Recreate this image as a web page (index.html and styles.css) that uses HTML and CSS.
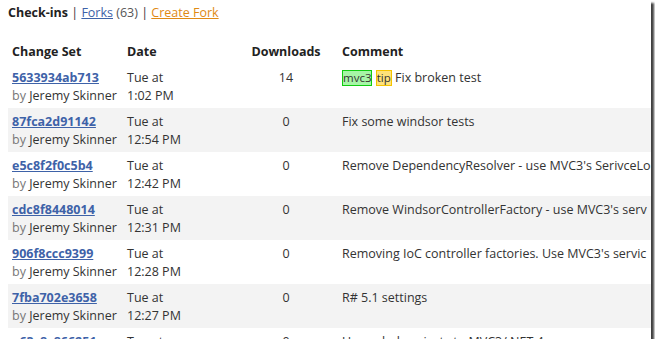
FILE: index.html
```html
<!DOCTYPE html>
<html lang="en">
<head>
  <meta charset="UTF-8">
  <title>Check-ins</title>
  <link rel="stylesheet" href="styles.css">
</head>
<body>
  <div class="frame">
    <!-- Pestañas -->
    <div class="tabs">
      <strong>Check-ins</strong> <span class="sep">|</span>
      <a href="#" class="link">Forks</a> <span class="count">(63)</span> <span class="sep">|</span>
      <a href="#" class="create">Create Fork</a>
    </div>

    <table class="changes">
      <colgroup>
        <col class="c-set">
        <col class="c-date">
        <col class="c-dl">
        <col>
      </colgroup>
      <thead>
        <tr>
          <th>Change Set</th>
          <th>Date</th>
          <th class="num">Downloads</th>
          <th>Comment</th>
        </tr>
      </thead>
      <tbody>
        <tr>
          <td><a href="#" class="hash">5633934ab713</a><br><span class="by">by</span> Jeremy Skinner</td>
          <td>Tue at<br>1:02 PM</td>
          <td class="num">14</td>
          <td><span class="tag tag-green">mvc3</span> <span class="tag tag-yellow">tip</span> Fix broken test</td>
        </tr>
        <tr>
          <td><a href="#" class="hash">87fca2d91142</a><br><span class="by">by</span> Jeremy Skinner</td>
          <td>Tue at<br>12:54 PM</td>
          <td class="num">0</td>
          <td>Fix some windsor tests</td>
        </tr>
        <tr>
          <td><a href="#" class="hash">e5c8f2f0c5b4</a><br><span class="by">by</span> Jeremy Skinner</td>
          <td>Tue at<br>12:42 PM</td>
          <td class="num">0</td>
          <td>Remove DependencyResolver - use MVC3's SerivceLo</td>
        </tr>
        <tr>
          <td><a href="#" class="hash">cdc8f8448014</a><br><span class="by">by</span> Jeremy Skinner</td>
          <td>Tue at<br>12:31 PM</td>
          <td class="num">0</td>
          <td>Remove WindsorControllerFactory - use MVC3's serv</td>
        </tr>
        <tr>
          <td><a href="#" class="hash">906f8ccc9399</a><br><span class="by">by</span> Jeremy Skinner</td>
          <td>Tue at<br>12:28 PM</td>
          <td class="num">0</td>
          <td>Removing IoC controller factories. Use MVC3's servic</td>
        </tr>
        <tr>
          <td><a href="#" class="hash">7fba702e3658</a><br><span class="by">by</span> Jeremy Skinner</td>
          <td>Tue at<br>12:27 PM</td>
          <td class="num">0</td>
          <td>R# 5.1 settings</td>
        </tr>
        <tr>
          <td><a href="#" class="hash">e63c8c866251</a><br><span class="by">by</span> Jeremy Skinner</td>
          <td>Tue at<br>12:20 PM</td>
          <td class="num">0</td>
          <td>Upgraded projects to MVC3/.NET 4</td>
        </tr>
      </tbody>
    </table>
  </div>
</body>
</html>
```

FILE: styles.css
```css
/* Página */
body {
  margin: 0;
  background: #ffffff;
  font-family: "Open Sans", "Noto Sans", Arial, sans-serif;
  font-size: 12.5px;
  color: #333333;
}

/* Marco de la captura con sombra */
.frame {
  width: 651px;
  height: 339px;
  overflow: hidden;
  background: #ffffff;
  box-shadow: 3px 3px 2px rgba(0, 0, 0, 0.75);
  padding: 0 0 0 8px;
  box-sizing: border-box;
}

/* Pestañas */
.tabs {
  line-height: 18px;
  padding-top: 4px;
  color: #333333;
}
.tabs strong {
  color: #222222;
}
.sep {
  color: #333333;
}
.link {
  color: #3e62a8;
}
.count {
  color: #555555;
}
.create {
  color: #e08a14;
}

/* Tabla de cambios */
.changes {
  margin-top: 18px;
  border-collapse: collapse;
  table-layout: fixed;
  width: 643px;
  white-space: nowrap;
}
.c-set {
  width: 115px;
}
.c-date {
  width: 123px;
}
.c-dl {
  width: 92px;
}
.changes th {
  text-align: left;
  font-weight: bold;
  color: #222222;
  padding: 3px 4px;
  line-height: 18px;
}
.changes td {
  vertical-align: top;
  padding: 5px 4px 3px;
  line-height: 18px;
  overflow: hidden;
}
.changes th.num,
.changes td.num {
  text-align: center;
  padding-right: 16px;
}
.changes tbody tr:nth-child(even) {
  background: #f3f3f3;
}

.hash {
  color: #3e62a8;
  font-weight: bold;
}
.by {
  color: #777777;
}

/* Etiquetas */
.tag {
  display: inline-block;
  font-size: 11.5px;
  line-height: 14px;
  padding: 0;
}
.tag-green {
  background: #a6f5a6;
  border: 1px solid #11cc11;
}
.tag-yellow {
  background: #ffe27a;
  border: 1px solid #f5c400;
}
```
